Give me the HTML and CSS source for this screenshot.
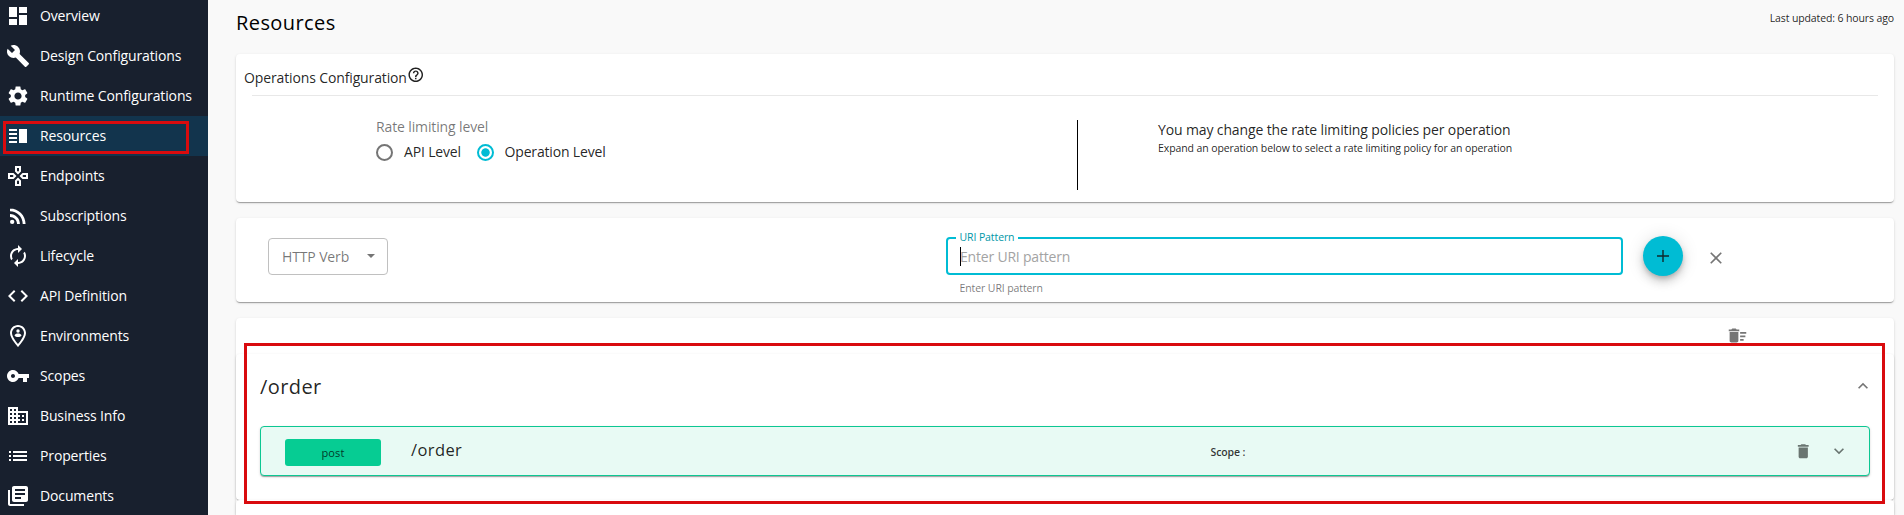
FILE: index.html
```html
<!DOCTYPE html>
<html lang="en">
<head>
<meta charset="utf-8">
<title>Resources</title>
<link rel="stylesheet" href="styles.css">
</head>
<body>
<div class="app">
  <nav class="sidebar">
    <a class="item"><svg viewBox="0 0 24 24"><path d="M3 13h8V3H3v10zm0 8h8v-6H3v6zm10 0h8V11h-8v10zm0-18v6h8V3h-8z"/></svg>Overview</a>
    <a class="item"><svg viewBox="0 0 24 24"><path d="M22.7 19l-9.1-9.1c.9-2.3.4-5-1.5-6.9-2-2-5-2.4-7.4-1.3L9 6 6 9 1.6 4.7C.4 7.1.9 10.1 2.9 12.1c1.9 1.9 4.6 2.4 6.9 1.5l9.1 9.1c.4.4 1 .4 1.4 0l2.3-2.3c.5-.4.5-1.100.1-1.400z"/></svg>Design Configurations</a>
    <a class="item"><svg viewBox="0 0 24 24"><path d="M19.140 12.940c.040-.300.060-.610.060-.940 0-.320-.020-.640-.070-.940l2.030-1.580c.180-.140.230-.410.120-.610l-1.920-3.320c-.120-.220-.370-.290-.590-.220l-2.390.960c-.500-.380-1.030-.700-1.620-.940l-.360-2.540c-.040-.240-.240-.410-.480-.410h-3.840c-.240 0-.430.170-.470.410l-.360 2.540c-.590.240-1.130.570-1.620.940l-2.390-.960c-.220-.080-.470 0-.590.220L2.740 8.870c-.120.210-.080.470.120.610l2.030 1.580c-.050.300-.090.630-.090.940s.020.640.070.940l-2.030 1.580c-.180.140-.230.410-.120.610l1.920 3.320c.120.220.370.290.590.220l2.390-.960c.500.380 1.030.700 1.620.940l.360 2.540c.050.240.240.410.480.410h3.840c.240 0 .440-.170.470-.410l.360-2.540c.590-.240 1.130-.560 1.620-.940l2.390.960c.220.080.470 0 .590-.220l1.920-3.320c.120-.220.070-.470-.120-.610l-2.010-1.580zM12 15.600c-1.980 0-3.600-1.620-3.600-3.600s1.620-3.600 3.600-3.600 3.600 1.620 3.600 3.600-1.620 3.600-3.600 3.600z"/></svg>Runtime Configurations</a>
    <a class="item selected"><svg viewBox="0 0 24 24"><path d="M3 15h8v-2H3v2zm0 4h8v-2H3v2zm0-8h8V9H3v2zm0-6v2h8V5H3zm10 0h8v14h-8V5z"/></svg>Resources</a>
    <a class="item"><svg viewBox="0 0 24 24"><path d="M13 4v2.670l-1 1-1-1V4h2m7 7v2h-2.670l-1-1 1-1H20M6.670 11l1 1-1 1H4v-2h2.670M12 16.330l1 1V20h-2v-2.670l1-1M15 2H9v5.500l3 3 3-3V2zm7 7h-5.500l-3 3 3 3H22V9zM7.500 9H2v6h5.500l3-3-3-3zm4.500 4.500l-3 3V22h6v-5.500l-3-3z"/></svg>Endpoints</a>
    <a class="item"><svg viewBox="0 0 24 24"><circle cx="6.180" cy="17.820" r="2.180"/><path d="M4 4.440v2.830c7.030 0 12.730 5.700 12.730 12.730h2.830c0-8.590-6.970-15.560-15.560-15.560zm0 5.660v2.830c3.900 0 7.070 3.170 7.070 7.070h2.830c0-5.470-4.430-9.900-9.900-9.900z"/></svg>Subscriptions</a>
    <a class="item"><svg viewBox="0 0 24 24"><path d="M12 6v3l4-4-4-4v3c-4.420 0-8 3.580-8 8 0 1.570.460 3.030 1.240 4.260L6.700 14.800c-.450-.830-.700-1.790-.700-2.800 0-3.310 2.690-6 6-6zm6.760 1.740L17.300 9.200c.440.840.700 1.790.700 2.800 0 3.310-2.690 6-6 6v-3l-4 4 4 4v-3c4.420 0 8-3.580 8-8 0-1.570-.460-3.030-1.240-4.260z"/></svg>Lifecycle</a>
    <a class="item"><svg viewBox="0 0 24 24"><path d="M9.400 16.600L4.800 12l4.600-4.600L8 6l-6 6 6 6 1.400-1.400zm5.200 0l4.600-4.600-4.600-4.600L16 6l6 6-6 6-1.400-1.400z"/></svg>API Definition</a>
    <a class="item"><svg viewBox="0 0 24 24"><path fill-rule="evenodd" d="M12 1C7.600 1 4 4.600 4 9c0 5.600 8 14 8 14s8-8.400 8-14c0-4.400-3.600-8-8-8zm0 2c3.300 0 6 2.700 6 6 0 3.400-3.700 8.400-6 11.100C9.700 17.400 6 12.400 6 9c0-3.300 2.700-6 6-6z"/><circle cx="12" cy="7" r="1.700"/><path d="M8.500 11.500c.500-1.300 2-1.900 3.500-1.900s3 .600 3.500 1.900c-.800 1-2 1.600-3.500 1.600s-2.700-.600-3.500-1.600z"/></svg>Environments</a>
    <a class="item"><svg viewBox="0 0 24 24"><path d="M12.650 10C11.830 7.670 9.610 6 7 6c-3.310 0-6 2.690-6 6s2.690 6 6 6c2.610 0 4.830-1.670 5.650-4H17v4h4v-4h2v-4H12.650zM7 14c-1.100 0-2-.900-2-2s.900-2 2-2 2 .900 2 2-.900 2-2 2z"/></svg>Scopes</a>
    <a class="item"><svg viewBox="0 0 24 24"><path d="M12 7V3H2v18h20V7H12zM6 19H4v-2h2v2zm0-4H4v-2h2v2zm0-4H4V9h2v2zm0-4H4V5h2v2zm4 12H8v-2h2v2zm0-4H8v-2h2v2zm0-4H8V9h2v2zm0-4H8V5h2v2zm10 12h-8v-2h2v-2h-2v-2h2v-2h-2V9h8v10zm-2-8h-2v2h2v-2zm0 4h-2v2h2v-2z"/></svg>Business Info</a>
    <a class="item"><svg viewBox="0 0 24 24"><path d="M3 13h2v-2H3v2zm0 4h2v-2H3v2zm0-8h2V7H3v2zm4 4h14v-2H7v2zm0 4h14v-2H7v2zM7 7v2h14V7H7z"/></svg>Properties</a>
    <a class="item"><svg viewBox="0 0 24 24"><path d="M4 6H2v14c0 1.100.900 2 2 2h14v-2H4V6zm16-4H8c-1.100 0-2 .900-2 2v12c0 1.100.900 2 2 2h12c1.100 0 2-.900 2-2V4c0-1.100-.900-2-2-2zm-1 9H9V9h10v2zm-4 4H9v-2h6v2zm4-8H9V5h10v2z"/></svg>Documents</a>
    <div class="mark mark-nav"></div>
  </nav>

  <main class="content">
    <header class="head">
      <h1>Resources</h1>
      <span class="updated">Last updated: 6 hours ago</span>
    </header>

    <section class="card config">
      <div class="config-title">Operations Configuration<svg viewBox="0 0 24 24"><path d="M11 18h2v-2h-2v2zm1-16C6.480 2 2 6.480 2 12s4.480 10 10 10 10-4.480 10-10S17.520 2 12 2zm0 18c-4.410 0-8-3.590-8-8s3.590-8 8-8 8 3.590 8 8-3.590 8-8 8zm0-14c-2.210 0-4 1.790-4 4h2c0-1.100.900-2 2-2s2 .900 2 2c0 2-3 1.750-3 5h2c0-2.250 3-2.500 3-5 0-2.210-1.790-4-4-4z"/></svg></div>
      <div class="config-body">
        <div class="rate">
          <div class="rate-label">Rate limiting level</div>
          <div class="radios">
            <label><i class="radio"></i>API Level</label>
            <label><i class="radio on"></i>Operation Level</label>
          </div>
        </div>
        <div class="rule"></div>
        <div class="hint">
          <div class="hint-main">You may change the rate limiting policies per operation</div>
          <div class="hint-sub">Expand an operation below to select a rate limiting policy for an operation</div>
        </div>
      </div>
    </section>

    <section class="card add">
      <div class="select">HTTP Verb<i class="caret-down"></i></div>
      <div class="field">
        <div class="input"><span class="label">URI Pattern</span><i class="cursor"></i><span class="placeholder">Enter URI pattern</span></div>
        <div class="helper">Enter URI pattern</div>
      </div>
      <button class="fab"><svg viewBox="0 0 20 20"><path d="M10 4v12M4 10h12"/></svg></button>
      <svg class="clear" viewBox="0 0 24 24"><path d="M19 6.410L17.590 5 12 10.590 6.410 5 5 6.410 10.590 12 5 17.590 6.410 19 12 13.410 17.590 19 19 17.590 13.410 12z"/></svg>
    </section>

    <section class="card list">
      <div class="toolbar"><svg viewBox="0 0 24 24"><path d="M15 16h4v2h-4zm0-8h7v2h-7zm0 4h6v2h-6zM3 18c0 1.100.900 2 2 2h6c1.100 0 2-.900 2-2V8H3v10zM14 5h-3l-1-1H6L5 5H2v2h12z"/></svg></div>
      <div class="card group">
        <div class="group-head"><h2>/order</h2><svg viewBox="0 0 24 24"><path d="M12 8l-6 6 1.410 1.410L12 10.830l4.590 4.580L18 14z"/></svg></div>
        <div class="operation">
          <span class="verb">post</span>
          <span class="path">/order</span>
          <span class="scope">Scope :</span>
          <svg class="trash" viewBox="0 0 24 24"><path d="M6 19c0 1.100.900 2 2 2h8c1.100 0 2-.900 2-2V7H6v12zM19 4h-3.500l-1-1h-5l-1 1H5v2h14V4z"/></svg>
          <svg class="expand" viewBox="0 0 24 24"><path d="M16.590 8.590L12 13.170 7.410 8.590 6 10l6 6 6-6z"/></svg>
        </div>
      </div>
      <div class="card group next"></div>
      <div class="mark mark-group"></div>
    </section>
  </main>
</div>
</body>
</html>
```
FILE: styles.css
```css
* { box-sizing: border-box; }
body {
  margin: 0;
  height: 515px;
  overflow: hidden;
  background: #f9f9f9;
  color: rgba(0, 0, 0, 0.87);
  font: 14px/20px "Open Sans", "Noto Sans", sans-serif;
  letter-spacing: -0.13px;
}
h1, h2 { margin: 0; font-weight: 400; font-size: 20px; line-height: 28px; letter-spacing: 0.42px; }
svg { display: block; flex: none; fill: currentColor; }

.app { display: flex; height: 515px; }

.sidebar {
  position: relative;
  flex: none;
  width: 208px;
  height: 515px;
  overflow: hidden;
  background: #18202e;
  color: #fff;
}
.item {
  display: flex;
  align-items: center;
  gap: 10px;
  height: 40px;
  padding-left: 6px;
}
.item:first-child { margin-top: -4px; }
.item:nth-last-child(2) { height: 39px; padding-top: 1px; }
.item svg { width: 24px; height: 24px; }
.item.selected { background: #12344d; }

.mark { position: absolute; border: 3px solid #d90b0e; }
.mark-nav { left: 3px; top: 121px; width: 186px; height: 33px; }
.mark-group { left: 8px; top: 25px; width: 1641px; height: 161px; }

.content { flex: 1; padding: 0 10px 0 28px; }
.head { display: flex; justify-content: space-between; height: 54px; padding-top: 9px; }
.head h1 { color: #000; }
.updated { font-size: 10.5px; line-height: 18px; letter-spacing: -0.12px; }

.card {
  background: #fff;
  border-radius: 4px;
  box-shadow: 0 2px 1px -1px rgba(0, 0, 0, 0.2), 0 1px 1px 0 rgba(0, 0, 0, 0.14), 0 1px 3px 0 rgba(0, 0, 0, 0.12);
}

.config { height: 148px; margin-bottom: 16px; padding: 12px 16px 0 8px; }
.config-title { display: flex; height: 29px; padding-top: 1px; line-height: 22px; }
.config-title svg { width: 17.5px; height: 17.5px; margin: -1px 0 0; }
.config-body { display: flex; height: 108px; margin-left: 8px; border-top: 1px solid #e8e8e8; }
.rate { width: 825px; padding: 21px 0 0 124px; }
.rate-label { color: rgba(0, 0, 0, 0.54); }
.radios { display: flex; gap: 15.7px; margin-top: 5px; }
.radios label { display: flex; align-items: center; gap: 11px; letter-spacing: -0.17px; }
.radio { width: 17px; height: 17px; border: 2px solid #757575; border-radius: 50%; }
.radio.on { border-color: #00bcd4; background: radial-gradient(circle, #00bcd4 3.8px, #fff 4.6px); }
.rule { width: 1px; height: 70px; margin-top: 24px; background: #000; }
.hint { padding: 24px 0 0 80px; }
.hint-main { letter-spacing: -0.13px; }
.hint-sub { font-size: 10.5px; line-height: 16px; letter-spacing: -0.1px; }

.add { display: flex; height: 84px; margin-bottom: 16px; padding-left: 32px; }
.select {
  display: flex;
  align-items: center;
  justify-content: space-between;
  width: 120px;
  height: 37px;
  margin-top: 20px;
  padding: 0 12px 0 13px;
  border: 1px solid #c0c0c0;
  border-radius: 4px;
  color: rgba(0, 0, 0, 0.54);
}
.caret-down { border: 4.5px solid transparent; border-top-color: #757575; border-bottom: 0; margin-bottom: 2px; }
.field { width: 677px; margin: 19px 20px 0 558px; }
.input {
  position: relative;
  display: flex;
  align-items: center;
  height: 38px;
  padding-left: 12px;
  border: 2px solid #00bcd4;
  border-radius: 4px;
}
.label {
  position: absolute;
  left: 7.5px;
  top: -10px;
  padding: 0 4px;
  background: #fff;
  color: #0097a7;
  font-size: 10.5px;
  line-height: 16px;
  letter-spacing: -0.1px;
}
.cursor { width: 1px; height: 19px; margin-right: -1px; background: #000; }
.placeholder { padding-top: 1px; color: #a3a3a3; letter-spacing: -0.2px; }
.helper { padding: 4px 0 0 13.5px; color: rgba(0, 0, 0, 0.54); font-size: 10.5px; line-height: 18px; letter-spacing: -0.1px; }
.fab {
  display: grid;
  place-items: center;
  width: 40px;
  height: 40px;
  margin-top: 18px;
  padding: 0;
  border: 0;
  border-radius: 50%;
  background: #00bcd4;
  box-shadow: 0 3px 5px -1px rgba(0, 0, 0, 0.2), 0 6px 10px 0 rgba(0, 0, 0, 0.14), 0 1px 18px 0 rgba(0, 0, 0, 0.12);
}
.fab svg { width: 20px; height: 20px; fill: none; stroke: #10282c; stroke-width: 1.4; }
.clear { width: 20px; height: 20px; margin: 30px 0 0 23.4px; color: #757575; }

.list { position: relative; height: 197px; border-radius: 4px 4px 0 0; }
.toolbar { height: 36px; padding: 7px 0 0 1491px; color: #757575; }
.toolbar svg { width: 21px; height: 21px; }
.group { height: 146px; padding: 0 24px; }
.group.next { height: 15px; border-radius: 4px 4px 0 0; }
.group-head { display: flex; align-items: center; justify-content: space-between; height: 72px; padding-bottom: 8px; }
.group-head h2 { padding-top: 2px; }
.group-head svg { width: 20px; height: 20px; margin-right: -3px; color: #757575; }
.operation {
  display: flex;
  height: 50px;
  padding-left: 24px;
  border: 1px solid #0cc792;
  border-radius: 4px;
  background: #e8faf4;
  box-shadow: 0 2px 1px -1px rgba(0, 0, 0, 0.2), 0 1px 1px 0 rgba(0, 0, 0, 0.14), 0 1px 3px 0 rgba(0, 0, 0, 0.12);
}
.verb {
  width: 96px;
  height: 27px;
  margin-top: 12px;
  border-radius: 3px;
  background: #06cc93;
  color: rgba(0, 0, 0, 0.75);
  font-size: 11px;
  line-height: 28px;
  letter-spacing: 0.1px;
  text-align: center;
}
.path { width: 799.5px; margin: 12px 0 0 30px; font-size: 16.5px; line-height: 22px; letter-spacing: 0.4px; }
.scope { width: 583.5px; margin-top: 16px; color: rgba(0, 0, 0, 0.8); font-size: 10.5px; font-weight: 600; line-height: 18px; letter-spacing: -0.12px; }
.trash { width: 18.5px; height: 18.5px; margin-top: 15px; color: #6a7571; }
.expand { width: 20px; height: 20px; margin: 14px 0 0 16px; color: #6a7571; }
```
